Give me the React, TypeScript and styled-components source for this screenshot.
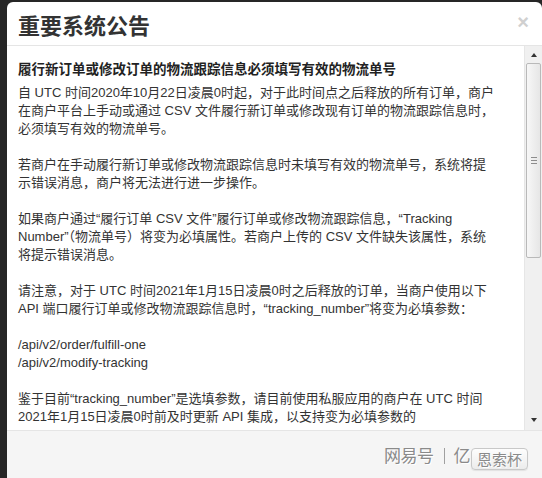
import React from 'react';
import styled, { createGlobalStyle } from 'styled-components';

const GlobalStyle = createGlobalStyle`
  html, body {
    margin: 0;
    padding: 0;
    background: #262626;
  }
  * {
    box-sizing: border-box;
  }
`;

const FONT = `"Liberation Sans", "Noto Sans CJK SC", sans-serif`;

const Backdrop = styled.div`
  width: 542px;
  height: 478px;
  padding: 2px 0 0 7px;
  display: flex;
  overflow: hidden;
`;

const Modal = styled.div`
  flex: 1;
  display: flex;
  flex-direction: column;
  background: #fff;
  border-radius: 6px 6px 0 0;
  overflow: hidden;
  font-family: ${FONT};
`;

const Header = styled.div`
  height: 44px;
  flex-shrink: 0;
  display: flex;
  align-items: center;
  justify-content: space-between;
  padding: 0 13px 0 11px;
  border-bottom: 1px solid #e5e5e5;
`;

const Title = styled.h3`
  margin: 0;
  font-family: "Noto Sans CJK SC", sans-serif;
  font-size: 22px;
  font-weight: 700;
  line-height: 30px;
  color: #333;
`;

const Close = styled.span`
  font-family: ${FONT};
  font-size: 20px;
  font-weight: 700;
  line-height: 20px;
  color: #d0d0d0;
  margin-top: -4px;
`;

const BodyRow = styled.div`
  flex: 1;
  min-height: 0;
  display: flex;
`;

const Content = styled.div`
  flex: 1;
  min-width: 0;
  overflow: hidden;
  padding: 13px 11px 0;
  color: #333;
`;

const Scrollbar = styled.div`
  width: 18px;
  flex-shrink: 0;
  display: flex;
  flex-direction: column;
  padding: 1px 1px 2px 1px;
  background: #f0f0f0;
  border-left: 1px solid #e6e6e6;
`;

const Arrow = styled.div<{ dir: 'up' | 'down' }>`
  height: 16px;
  flex-shrink: 0;
  display: flex;
  align-items: center;
  justify-content: center;

  &::before {
    content: '';
    width: 0;
    height: 0;
    border-left: 3.5px solid transparent;
    border-right: 3.5px solid transparent;
    ${({ dir }) =>
      dir === 'up' ? 'border-bottom: 4px solid #333;' : 'border-top: 4px solid #333;'}
  }
`;

const Thumb = styled.div`
  height: 195px;
  flex-shrink: 0;
  display: flex;
  flex-direction: column;
  align-items: center;
  justify-content: center;
  gap: 2px;
  background: linear-gradient(to right, #f7f7f7, #e6e6e6);
  border: 1px solid #b9b9b9;
  border-radius: 2px;
`;

const Grip = styled.span`
  width: 6px;
  height: 1px;
  background: #8c8c8c;
`;

const Track = styled.div`
  flex: 1;
`;

const Heading = styled.div`
  font-family: "Noto Sans CJK SC", sans-serif;
  font-size: 13.5px;
  font-weight: 700;
  line-height: 18px;
  color: #222;
  margin-bottom: 7px;
  white-space: nowrap;
`;

const Paragraph = styled.p`
  margin: 0 0 18px;
  font-size: 13px;
  line-height: 18px;
`;

const Line = styled.span`
  display: block;
  white-space: nowrap;
`;

const Footer = styled.div`
  height: 48px;
  flex-shrink: 0;
  display: flex;
  align-items: center;
  justify-content: flex-end;
  padding: 0 14px 0 0;
  background: #f5f5f5;
  border-top: 1px solid #e5e5e5;
`;

const Watermark = styled.span`
  font-family: "Noto Sans CJK SC", sans-serif;
  font-size: 17px;
  line-height: 20px;
  color: #8a8a8a;
  letter-spacing: -0.5px;
  margin-right: 1px;
  text-shadow: 1px 1px 0 #fff;
  white-space: nowrap;
`;

const Divider = styled.span`
  display: inline-block;
  width: 1px;
  height: 16px;
  background: #a0a0a0;
  margin: 0 8px 0 11px;
  vertical-align: -2px;
`;

const Button = styled.button`
  height: 22px;
  padding: 0 5px;
  font-family: "Noto Sans CJK SC", sans-serif;
  font-size: 15px;
  line-height: 18px;
  color: #8a8a8a;
  background: linear-gradient(#fdfdfd, #ececec);
  border: 1px solid #c8c8c8;
  border-radius: 4px;
  box-shadow: 0 1px 1px rgba(0, 0, 0, 0.08);
  text-shadow: 1px 1px 0 #fff;
  margin-top: 8px;
`;

const paragraphs: string[][] = [
  [
    '自 UTC 时间2020年10月22日凌晨0时起，对于此时间点之后释放的所有订单，商户',
    '在商户平台上手动或通过 CSV 文件履行新订单或修改现有订单的物流跟踪信息时，',
    '必须填写有效的物流单号。',
  ],
  [
    '若商户在手动履行新订单或修改物流跟踪信息时未填写有效的物流单号，系统将提',
    '示错误消息，商户将无法进行进一步操作。',
  ],
  [
    '如果商户通过“履行订单 CSV 文件”履行订单或修改物流跟踪信息，“Tracking',
    'Number”（物流单号）将变为必填属性。若商户上传的 CSV 文件缺失该属性，系统',
    '将提示错误消息。',
  ],
  [
    '请注意，对于 UTC 时间2021年1月15日凌晨0时之后释放的订单，当商户使用以下',
    'API 端口履行订单或修改物流跟踪信息时，“tracking_number”将变为必填参数：',
  ],
  ['/api/v2/order/fulfill-one', '/api/v2/modify-tracking'],
  [
    '鉴于目前“tracking_number”是选填参数，请目前使用私服应用的商户在 UTC 时间',
    '2021年1月15日凌晨0时前及时更新 API 集成，以支持变为必填参数的',
    '“tracking_number”。',
  ],
];

export default function App(): JSX.Element {
  return (
    <>
      <GlobalStyle />
      <Backdrop>
        <Modal>
          <Header>
            <Title>重要系统公告</Title>
            <Close>×</Close>
          </Header>
          <BodyRow>
            <Content>
              <Heading>履行新订单或修改订单的物流跟踪信息必须填写有效的物流单号</Heading>
              {paragraphs.map((lines, i) => (
                <Paragraph key={i}>
                  {lines.map((line) => (
                    <Line key={line}>{line}</Line>
                  ))}
                </Paragraph>
              ))}
            </Content>
            <Scrollbar>
              <Arrow dir="up" />
              <Thumb>
                <Grip />
                <Grip />
                <Grip />
              </Thumb>
              <Track />
              <Arrow dir="down" />
            </Scrollbar>
          </BodyRow>
          <Footer>
            <Watermark>
              网易号
              <Divider />
              亿
            </Watermark>
            <Button type="button">恩索杯</Button>
          </Footer>
        </Modal>
      </Backdrop>
    </>
  );
}
